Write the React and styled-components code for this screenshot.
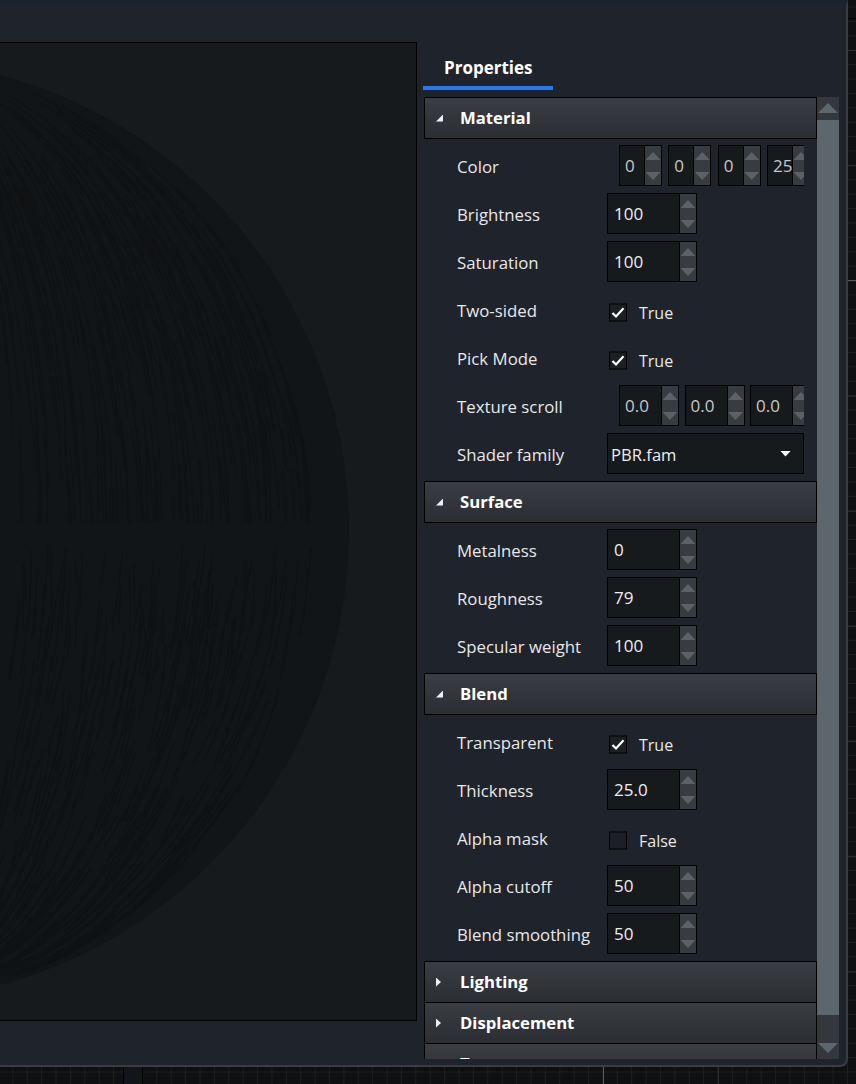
import React from "react";
import styled, {createGlobalStyle} from "styled-components";

const GlobalStyle = createGlobalStyle`
    html, body {
        margin: 0;
        padding: 0;
        overflow: hidden;
    }
    body {
        font-family: 'Open Sans', 'Noto Sans', sans-serif;
        background-color: #0e1012;
        background-image:
            linear-gradient(90deg, #000 1px, #12161a 1px, #12161a 19px, #000 19px),
            linear-gradient(#000, #000),
            linear-gradient(90deg, #5a5b5d 1px, transparent 1px),
            linear-gradient(#5a5b5d 1px, transparent 1px),
            linear-gradient(#2d2f31 1px, transparent 1px),
            linear-gradient(90deg, #2d2f31 1px, transparent 1px),
            linear-gradient(#1c1e20 1px, transparent 1px),
            linear-gradient(90deg, #1c1e20 1px, transparent 1px);
        background-size:
            20px 17px,
            8px 1px,
            1px 100%,
            100% 1px,
            115.2px 115.2px,
            1px 100%,
            14.4px 14.4px,
            14.4px 14.4px;
        background-position:
            123px 1067px,
            848px 18px,
            603px 0,
            0 280px,
            0 50px,
            718px 0,
            0 6.6px,
            12.4px 0;
        background-repeat:
            no-repeat,
            no-repeat,
            no-repeat,
            no-repeat,
            repeat,
            no-repeat,
            repeat,
            repeat;
    }
`;

const Page = styled.div`
    width: 856px;
    height: 1084px;
    overflow: hidden;
`;

const Window = styled.div`
    width: 848px;
    height: 1067px;
    box-sizing: border-box;
    display: flex;
    background-color: #1f232b;
    border-top: 5px solid #1b232e;
    border-right: 2px solid #3a3d40;
    border-bottom: 2px solid #3a3d40;
    border-bottom-right-radius: 8px;
    overflow: hidden;
`;

const LeftPane = styled.div`
    width: 423px;
    flex-shrink: 0;
    padding-top: 37px;
`;

const Viewport = styled.div`
    width: 417px;
    height: 979px;
    box-sizing: border-box;
    background-color: #161a1c;
    border: 1px solid #000;
    border-left: none;
`;

const SphereSvg = styled.svg`
    display: block;
`;

const RightPane = styled.div`
    width: 423px;
    display: flex;
    flex-direction: column;
`;

const TabBar = styled.div`
    height: 85px;
    display: flex;
    align-items: flex-end;
`;

const Tab = styled.div`
    width: 130px;
    height: 42px;
    box-sizing: border-box;
    padding-left: 21px;
    border-bottom: 4px solid #2a78f6;
    font-size: 17px;
    line-height: 40px;
    font-weight: 700;
    color: #fff;
`;

const ListArea = styled.div`
    margin-top: 7px;
    margin-left: 1px;
    width: 415px;
    height: 962px;
    display: flex;
    overflow: hidden;
`;

const Sections = styled.div`
    width: 393px;
    flex-shrink: 0;
`;

const SectionHeader = styled.div`
    height: 42px;
    box-sizing: border-box;
    padding-bottom: 2px;
    margin-bottom: ${p => (p.$open ? 0 : -1)}px;
    display: flex;
    align-items: center;
    border: 1px solid #000;
    background: linear-gradient(#3a3e43, #2a2d31);
    font-size: 16.7px;
    font-weight: 700;
    color: #fff;
`;

const CaretBox = styled.span`
    width: 35px;
    box-sizing: border-box;
    display: flex;
    flex-shrink: 0;
    padding: 2px 0 0 11px;
`;

const Caret = styled.span`
    display: block;
    background-color: #f0f0f0;
    ${p => p.$open
        ? `width: 7px; height: 7px; clip-path: polygon(100% 0, 100% 100%, 0 100%);`
        : `width: 5px; height: 9px; clip-path: polygon(0 0, 100% 50%, 0 100%);`}
`;

const SectionBody = styled.div`
    padding: 6px 0 7px;
    display: flex;
    flex-direction: column;
    gap: 7px;
`;

const Row = styled.div`
    height: 41px;
    display: flex;
    align-items: center;
`;

const Label = styled.div`
    width: 150px;
    flex-shrink: 0;
    padding-left: 33px;
    font-size: 16.8px;
    line-height: 22px;
    color: #e8e8e8;
    white-space: nowrap;
    transform: translateY(1px);
`;

const Value = styled.div`
    width: 197px;
    height: 41px;
    display: flex;
    align-items: center;
    overflow: hidden;
`;

const Multi = styled(Value)`
    padding-left: 12px;
    box-sizing: border-box;
    gap: ${p => p.$gap}px;
`;

const SpinBox = styled.div`
    width: ${p => p.$width}px;
    height: 41px;
    flex-shrink: 0;
    box-sizing: border-box;
    display: flex;
    border: 1px solid #000;
    background-color: #171a1c;
`;

const SpinText = styled.div`
    flex: 1;
    min-width: 0;
    box-sizing: border-box;
    padding-left: ${p => (p.$small ? 5 : 6)}px;
    font-size: 17px;
    line-height: 40px;
    color: ${p => (p.$small ? "#c4c8cc" : "#eceef0")};
    white-space: nowrap;
    overflow: hidden;
`;

const Stepper = styled.div`
    width: 17px;
    flex-shrink: 0;
    box-sizing: border-box;
    border-left: 1px solid #000;
    background-color: #383c41;
    display: flex;
    flex-direction: column;
    align-items: center;
    justify-content: space-between;
    padding: 6px 0 5px;
`;

const StepArrow = styled.span`
    display: block;
    width: 15px;
    height: 8px;
    background-color: #5a6167;
    clip-path: ${p => (p.$down
        ? "polygon(0 0, 100% 0, 50% 100%)"
        : "polygon(50% 0, 100% 100%, 0 100%)")};
`;

const CheckWrap = styled.div`
    display: flex;
    align-items: center;
    gap: 12px;
    padding-left: 2px;
    transform: translateY(2.5px);
`;

const CheckBox = styled.div`
    width: 18px;
    height: 18px;
    box-sizing: border-box;
    display: flex;
    align-items: center;
    justify-content: center;
    border: 1px solid #000;
    background-color: #1c1f23;
`;

const CheckText = styled.span`
    font-size: 16px;
    padding-top: 1px;
    color: #e8e8e8;
`;

const Select = styled.div`
    width: 197px;
    height: 41px;
    box-sizing: border-box;
    display: flex;
    align-items: center;
    justify-content: space-between;
    padding: 2px 12px 0 3px;
    border: 1px solid #000;
    background-color: #171a1c;
    font-size: 16.6px;
    color: #eceef0;
`;

const SelectCaret = styled.span`
    display: block;
    width: 11px;
    height: 6px;
    margin-top: -2px;
    background-color: #fff;
    clip-path: polygon(0 0, 100% 0, 50% 100%);
`;

const Scrollbar = styled.div`
    width: 22px;
    flex-shrink: 0;
    display: flex;
    flex-direction: column;
    background-color: #34383d;
`;

const ScrollButton = styled.div`
    height: ${p => p.$height}px;
    flex-shrink: 0;
    display: flex;
    justify-content: center;
    padding-top: ${p => p.$top}px;
    box-sizing: border-box;
`;

const ScrollArrow = styled.span`
    display: block;
    width: 20px;
    height: 10px;
    background-color: #5e666d;
    clip-path: ${p => (p.$down
        ? "polygon(0 0, 100% 0, 50% 100%)"
        : "polygon(50% 0, 100% 100%, 0 100%)")};
`;

const ScrollThumb = styled.div`
    height: 895px;
    flex-shrink: 0;
    background-color: #5e666d;
`;

const sections = [
    {title: "Material", open: true, rows: [
        {label: "Color", kind: "multi", width: 43, gap: 6.33, values: ["0", "0", "0", "25"]},
        {label: "Brightness", kind: "spin", value: "100"},
        {label: "Saturation", kind: "spin", value: "100"},
        {label: "Two-sided", kind: "check", value: true},
        {label: "Pick Mode", kind: "check", value: true},
        {label: "Texture scroll", kind: "multi", width: 60, gap: 5.5, values: ["0.0", "0.0", "0.0"]},
        {label: "Shader family", kind: "select", value: "PBR.fam"},
    ]},
    {title: "Surface", open: true, rows: [
        {label: "Metalness", kind: "spin", value: "0"},
        {label: "Roughness", kind: "spin", value: "79"},
        {label: "Specular weight", kind: "spin", value: "100"},
    ]},
    {title: "Blend", open: true, rows: [
        {label: "Transparent", kind: "check", value: true},
        {label: "Thickness", kind: "spin", value: "25.0"},
        {label: "Alpha mask", kind: "check", value: false},
        {label: "Alpha cutoff", kind: "spin", value: "50"},
        {label: "Blend smoothing", kind: "spin", value: "50"},
    ]},
    {title: "Lighting"},
    {title: "Displacement"},
    {title: "Texture"},
];

// small seeded random so the hair looks the same on every run
function makeRandom(seed) {
    let s = seed;
    return () => {
        s = (s * 16807) % 2147483647;
        return (s - 1) / 2147483646;
    };
}

const CX = -122;
const CY = 530;
const R = 471;

function hairStrokes(seed, count, yFrom, yTo, minLen, maxLen, wobble) {
    const rnd = makeRandom(seed);
    const out = [];
    for (let i = 0; i < count; i++) {
        const k = 0.3 + rnd() * 0.62;
        const y0 = yFrom + rnd() * (yTo - yFrom);
        const len = minLen + rnd() * (maxLen - minLen);
        const drift = (rnd() - 0.5) * wobble;
        let d = "";
        const steps = 5;
        for (let j = 0; j <= steps; j++) {
            const y = Math.min(y0 + (len * j) / steps, yTo);
            const dy = (y - CY) / R;
            const x = CX + R * k * Math.sqrt(Math.max(0, 1 - dy * dy)) + (drift * j) / steps;
            d += `${j === 0 ? "M" : "L"}${x.toFixed(1)} ${y.toFixed(1)}`;
        }
        out.push(d);
    }
    return out;
}

const upperHair = hairStrokes(11, 300, 90, 522, 40, 170, 8);
const lowerHair = hairStrokes(29, 380, 545, 975, 30, 110, 14);

function Sphere() {
    return (
        <SphereSvg width="416" height="977" viewBox="0 43 416 977">
            <defs>
                <clipPath id="ball">
                    <circle cx={CX} cy={CY} r={R} />
                </clipPath>
            </defs>
            <circle cx={CX} cy={CY} r={R} fill="#121517" />
            <g clipPath="url(#ball)" fill="none" strokeWidth="1.2">
                <path d={upperHair.join("")} stroke="#0d0e10" strokeOpacity="0.5" />
                <path d={lowerHair.join("")} stroke="#0c0d0f" strokeOpacity="0.5" />
            </g>
        </SphereSvg>
    );
}

function Spin({value, width, small}) {
    return (
        <SpinBox $width={width}>
            <SpinText $small={small}>{value}</SpinText>
            <Stepper>
                <StepArrow />
                <StepArrow $down />
            </Stepper>
        </SpinBox>
    );
}

function RowValue({row}) {
    if (row.kind === "multi") {
        return (
            <Multi $gap={row.gap}>
                {row.values.map((v, i) => <Spin key={i} value={v} width={row.width} small />)}
            </Multi>
        );
    }
    if (row.kind === "spin") {
        return <Value><Spin value={row.value} width={90} /></Value>;
    }
    if (row.kind === "check") {
        return (
            <Value>
                <CheckWrap>
                    <CheckBox>
                        {row.value && (
                            <svg width="14" height="12" viewBox="0 0 14 12">
                                <path d="M1.5 6.5 L5 10 L12.5 1.8" fill="none" stroke="#fff" strokeWidth="2.2" />
                            </svg>
                        )}
                    </CheckBox>
                    <CheckText>{row.value ? "True" : "False"}</CheckText>
                </CheckWrap>
            </Value>
        );
    }
    return (
        <Value>
            <Select>
                {row.value}
                <SelectCaret />
            </Select>
        </Value>
    );
}

export default function App() {
    return (
        <Page>
            <GlobalStyle />
            <Window>
                <LeftPane>
                    <Viewport>
                        <Sphere />
                    </Viewport>
                </LeftPane>
                <RightPane>
                    <TabBar>
                        <Tab>Properties</Tab>
                    </TabBar>
                    <ListArea>
                        <Sections>
                            {sections.map(s => (
                                <div key={s.title}>
                                    <SectionHeader $open={s.open}>
                                        <CaretBox><Caret $open={s.open} /></CaretBox>
                                        {s.title}
                                    </SectionHeader>
                                    {s.open && (
                                        <SectionBody>
                                            {s.rows.map(r => (
                                                <Row key={r.label}>
                                                    <Label>{r.label}</Label>
                                                    <RowValue row={r} />
                                                </Row>
                                            ))}
                                        </SectionBody>
                                    )}
                                </div>
                            ))}
                        </Sections>
                        <Scrollbar>
                            <ScrollButton $height={23} $top={6}><ScrollArrow /></ScrollButton>
                            <ScrollThumb />
                            <ScrollButton $height={44} $top={28}><ScrollArrow $down /></ScrollButton>
                        </Scrollbar>
                    </ListArea>
                </RightPane>
            </Window>
        </Page>
    );
}
